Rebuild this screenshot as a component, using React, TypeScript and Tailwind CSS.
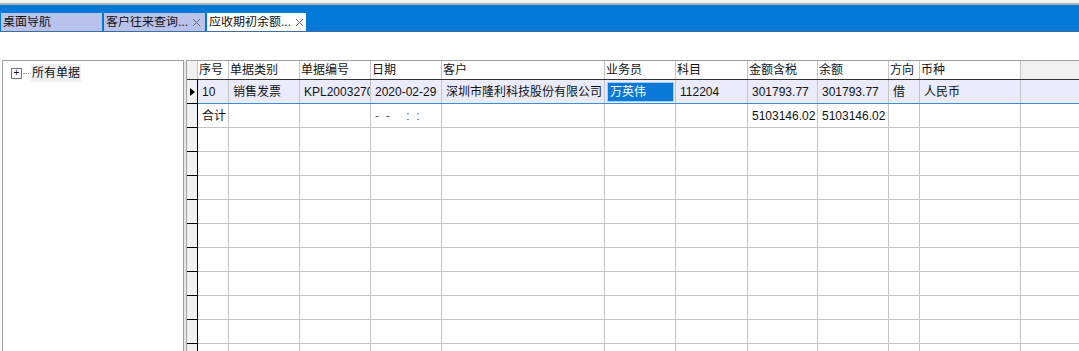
import React from 'react';

const font = { fontFamily: '"Liberation Sans", "Noto Sans CJK SC", sans-serif' };

const columns = [
  { key: 'seq', title: '序号', width: 'w-[31px]' },
  { key: 'type', title: '单据类别', width: 'w-[71px]' },
  { key: 'no', title: '单据编号', width: 'w-[71px]' },
  { key: 'date', title: '日期', width: 'w-[71px]' },
  { key: 'customer', title: '客户', width: 'w-[163px]' },
  { key: 'sales', title: '业务员', width: 'w-[71px]' },
  { key: 'subject', title: '科目', width: 'w-[72px]' },
  { key: 'amount', title: '金额含税', width: 'w-[70px]' },
  { key: 'balance', title: '余额', width: 'w-[71px]' },
  { key: 'dir', title: '方向', width: 'w-[31px]' },
  { key: 'currency', title: '币种', width: 'w-[101px]' },
];

type Row = Record<string, string>;

const dataRow: Row = {
  seq: '10',
  type: '销售发票',
  no: 'KPL20032700',
  date: '2020-02-29',
  customer: '深圳市隆利科技股份有限公司',
  sales: '万英伟',
  subject: '112204',
  amount: '301793.77',
  balance: '301793.77',
  dir: '借',
  currency: '人民币',
};

const totalRow: Row = {
  seq: '合计',
  date: '-  -     :  :',
  amount: '5103146.02',
  balance: '5103146.02',
};

function CloseIcon() {
  return (
    <svg width="9" height="9" viewBox="0 0 9 9" className="shrink-0">
      <path d="M1 1 L8 8 M8 1 L1 8" stroke="#6b6b6b" strokeWidth="1" fill="none" />
    </svg>
  );
}

function Tab({ label, active, closable }: { label: string; active?: boolean; closable?: boolean }) {
  return (
    <div
      className={`flex h-[18px] items-center gap-[4px] px-[2px] text-[12px] leading-none text-[#111] ${
        active ? 'w-[99px] bg-white' : 'w-[101px] bg-[#b9c2ea]'
      }`}
    >
      <span className="truncate">{label}</span>
      {closable && <CloseIcon />}
    </div>
  );
}

function GridRow({ row, selected }: { row?: Row; selected?: boolean }) {
  return (
    <div className={`flex h-[24px] ${selected ? 'border-b border-b-[#3a8fd0] bg-[#eaebfc]' : 'border-b border-b-[#c4c4c4]'}`}>
      <div className="relative -mb-[1px] w-[11px] shrink-0 border-r border-b border-r-black border-b-black bg-[#f0f0f0]">
        {selected && (
          <span className="absolute left-[3px] top-[8px] h-0 w-0 border-y-[4px] border-l-[5px] border-y-transparent border-l-black" />
        )}
      </div>
      {columns.map((col) => {
        const value = row?.[col.key] ?? '';
        const isSales = selected && col.key === 'sales';
        return (
          <div
            key={col.key}
            className={`${col.width} flex shrink-0 items-center overflow-hidden whitespace-pre border-r border-r-[#c4c4c4] pl-[4px] text-[12px] text-[#111]`}
          >
            {isSales ? (
              <div className="-ml-[2px] flex h-[20px] w-[67px] items-center border border-[#9fd0f5] bg-[#0a78d6] pl-[2px] text-white">
                {value}
              </div>
            ) : (
              <span className={col.key === 'date' && !selected ? 'text-[#555]' : ''}>{value}</span>
            )}
          </div>
        );
      })}
      <div className="flex-1" />
    </div>
  );
}

export default function App() {
  const emptyRows = Array.from({ length: 10 });

  return (
    <div className="h-[351px] w-[1079px] overflow-hidden bg-white" style={font}>
      <div className="h-[3px] bg-[#f4f4f4]" />
      <div className="h-[2px] bg-[#a9b4c0]" />
      <div className="flex h-[27px] items-end gap-[2px] border-b border-b-[#3d6e9c] bg-[#0078d7] pl-[1px]">
        <Tab label="桌面导航" />
        <Tab label="客户往来查询..." closable />
        <Tab label="应收期初余额..." active closable />
      </div>

      <div className="h-[28px]" />

      <div className="flex h-[291px]">
        <div className="ml-[2px] w-[182px] shrink-0 border-l border-t border-r border-[#a0a0a0]">
          <div className="flex items-center pl-[8px] pt-[3px] text-[12px] text-[#111]">
            <span className="flex h-[11px] w-[11px] items-center justify-center border border-[#777] text-[10px] leading-none">+</span>
            <span className="mx-[1px] w-[6px] border-t border-dotted border-[#888]" />
            <span className="ml-[1px] bg-[#f0f0f0] px-[1px]">所有单据</span>
          </div>
        </div>
        <div className="w-[2px] shrink-0 bg-[#e6e6e6]" />
        <div className="flex-1 border-l border-t border-[#a0a0a0]">
          <div className="flex h-[19px] border-b border-b-[#c4c4c4]">
            <div className="w-[11px] shrink-0 border-r border-r-[#c4c4c4] bg-[#f0f0f0]" />
            {columns.map((col) => (
              <div
                key={col.key}
                className={`${col.width} flex shrink-0 items-center whitespace-nowrap border-r border-r-[#c4c4c4] pl-[1px] text-[12px] text-[#111]`}
              >
                {col.title}
              </div>
            ))}
            <div className="flex-1 bg-[#f0f0f0]" />
          </div>
          <div className="-mt-[1px] border-t border-t-[#333]">
            <GridRow row={dataRow} selected />
            <GridRow row={totalRow} />
            {emptyRows.map((_, i) => (
              <GridRow key={i} />
            ))}
          </div>
        </div>
      </div>
    </div>
  );
}
